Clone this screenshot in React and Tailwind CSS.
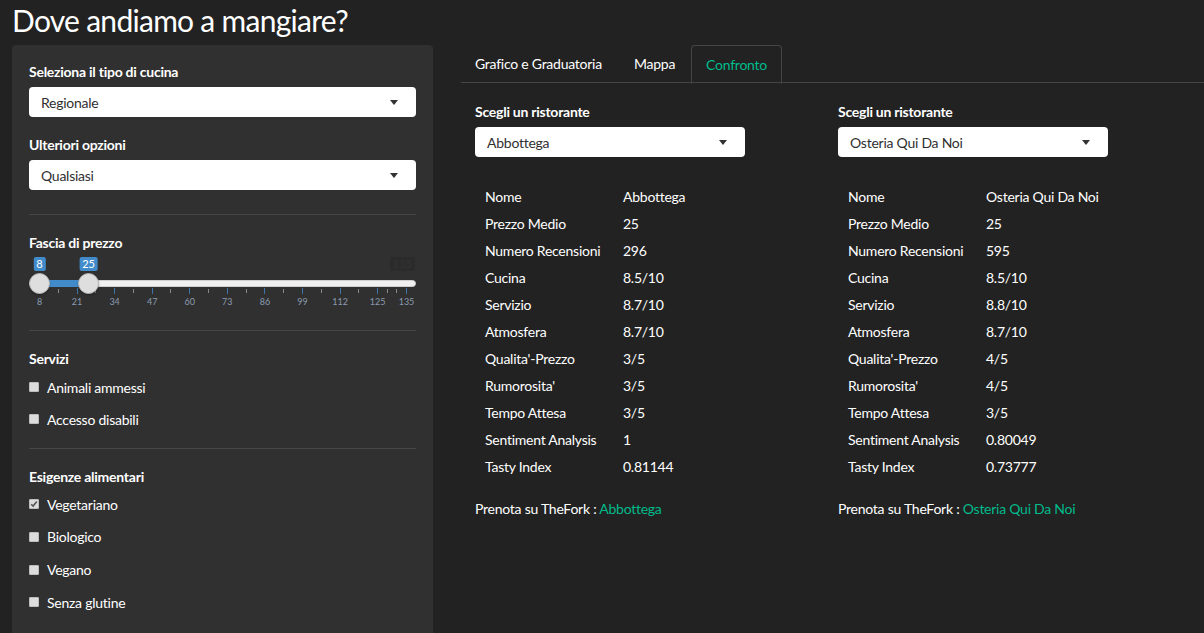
import React from "react";

function Select({ value, className = "" }) {
  return (
    <div className={`h-[30px] bg-white rounded-[4px] flex items-center justify-between pl-[12px] pr-[18px] text-[#303030] text-[14px] ${className}`}>
      <span>{value}</span>
      <span className="w-0 h-0 border-l-[4px] border-r-[4px] border-t-[5px] border-l-transparent border-r-transparent border-t-[#333]" />
    </div>
  );
}

function Label({ children, className = "" }) {
  return <div className={`font-bold text-[14px] leading-[20px] text-white ${className}`}>{children}</div>;
}

function Check({ label, checked }) {
  return (
    <div className="flex items-center h-[20px]">
      <span className="w-[10px] h-[10px] bg-[#dcdcdc] border border-[#bdbdbd] rounded-[1px] flex items-center justify-center mr-[8px]">
        {checked && (
          <svg width="8" height="8" viewBox="0 0 8 8">
            <path d="M1.2 4.2 L3.1 6.1 L6.8 1.6" stroke="#555" strokeWidth="1.6" fill="none" />
          </svg>
        )}
      </span>
      <span className="text-[14px] text-white">{label}</span>
    </div>
  );
}

function Slider() {
  const x = (v) => 10 + ((v - 8) / 127) * 367;
  const majors = [8, 21, 34, 47, 60, 73, 86, 99, 112, 125, 135];
  const minors = [];
  for (let i = 0; i < majors.length - 2; i++) minors.push((majors[i] + majors[i + 1]) / 2);
  minors.push(128.3, 131.7);
  return (
    <div className="relative h-[62px] text-[11px] tracking-normal">
      <div className="absolute top-[4px] h-[14px] px-[3px] leading-[14px] rounded-[2px] bg-[#2b2b2b] text-[#333333] right-[1px]">135</div>
      <div className="absolute top-[27px] left-0 right-0 h-[7px] rounded-full bg-[#f0f0f0] border border-[#cfcfcf]" />
      <div className="absolute top-[27px] h-[7px] bg-[#428bca]" style={{ left: x(8), width: x(25) - x(8) }} />
      {minors.map((v) => (
        <div key={"m" + v} className="absolute top-[36px] w-px h-[4px] bg-[#888]" style={{ left: x(v) }} />
      ))}
      {majors.map((v) => (
        <React.Fragment key={v}>
          <div className="absolute top-[35px] w-px h-[6px] bg-[#3f73a6]" style={{ left: x(v) }} />
          <div className="absolute top-[43px] w-[30px] -ml-[15px] text-center text-[9px] leading-[12px] text-[#8b9bb0]" style={{ left: x(v) + 0.5 }}>
            {v}
          </div>
        </React.Fragment>
      ))}
      {[8, 25].map((v) => (
        <React.Fragment key={"h" + v}>
          <div className="absolute top-[4px] h-[14px] px-[3px] leading-[14px] rounded-[2px] bg-[#428bca] text-white -translate-x-1/2" style={{ left: x(v) + 0.5 }}>
            {v}
          </div>
          <div className="absolute top-[20px] w-[21px] h-[21px] -ml-[10px] rounded-full bg-[#dedede] border border-[#b5b5b5] shadow-[0_1px_2px_rgba(0,0,0,0.35)]" style={{ left: x(v) }} />
        </React.Fragment>
      ))}
    </div>
  );
}

const left = [
  ["Nome", "Abbottega"],
  ["Prezzo Medio", "25"],
  ["Numero Recensioni", "296"],
  ["Cucina", "8.5/10"],
  ["Servizio", "8.7/10"],
  ["Atmosfera", "8.7/10"],
  ["Qualita'-Prezzo", "3/5"],
  ["Rumorosita'", "3/5"],
  ["Tempo Attesa", "3/5"],
  ["Sentiment Analysis", "1"],
  ["Tasty Index", "0.81144"],
];
const right = [
  ["Nome", "Osteria Qui Da Noi"],
  ["Prezzo Medio", "25"],
  ["Numero Recensioni", "595"],
  ["Cucina", "8.5/10"],
  ["Servizio", "8.8/10"],
  ["Atmosfera", "8.7/10"],
  ["Qualita'-Prezzo", "4/5"],
  ["Rumorosita'", "4/5"],
  ["Tempo Attesa", "3/5"],
  ["Sentiment Analysis", "0.80049"],
  ["Tasty Index", "0.73777"],
];

function Column({ sel, rows, name }) {
  return (
    <div className="w-[363px] pl-[15px] pr-[15px]">
      <Label>Scegli un ristorante</Label>
      <Select value={sel} className="w-[270px] mt-[5px]" />
      <div className="mt-[26px]">
        {rows.map(([k, v]) => (
          <div key={k} className="flex h-[27px] items-center text-[14px]">
            <div className="w-[148px] pl-[10px]">{k}</div>
            <div>{v}</div>
          </div>
        ))}
      </div>
      <div className="mt-[19px] h-[20px] leading-[20px] text-[14px]">
        Prenota su TheFork : <span className="text-[#00bc8c]">{name}</span>
      </div>
    </div>
  );
}

export default function App() {
  return (
    <div className="min-h-screen bg-[#222222] text-white font-['Lato','Open_Sans',sans-serif] tracking-[-0.25px] overflow-hidden">
      <div className="h-[45px] pl-[12px] text-[30px] leading-[41px] tracking-[-0.72px]">Dove andiamo a mangiare?</div>
      <div className="flex">
        <div className="ml-[12px] w-[421px] h-[600px] bg-[#303030] rounded-t-[4px] px-[17px] pt-[17px] shrink-0">
          <Label>Seleziona il tipo di cucina</Label>
          <Select value="Regionale" className="mt-[5px]" />
          <Label className="mt-[18px]">Ulteriori opzioni</Label>
          <Select value="Qualsiasi" className="mt-[5px]" />
          <div className="mt-[24px] h-px bg-[#464646]" />
          <Label className="mt-[18px]">Fascia di prezzo</Label>
          <Slider />
          <div className="mt-[15px] h-px bg-[#464646]" />
          <Label className="mt-[18px]">Servizi</Label>
          <div className="mt-[8px] flex flex-col gap-[12px]">
            <Check label="Animali ammessi" />
            <Check label="Accesso disabili" />
          </div>
          <div className="mt-[19px] h-px bg-[#464646]" />
          <Label className="mt-[18px]">Esigenze alimentari</Label>
          <div className="mt-[7px] flex flex-col gap-[12.8px]">
            <Check label="Vegetariano" checked />
            <Check label="Biologico" />
            <Check label="Vegano" />
            <Check label="Senza glutine" />
          </div>
        </div>
        <div className="ml-[28px] flex-1">
          <div className="flex h-[38px] border-b border-[#464545] text-[14px]">
            <div className="px-[14px] flex items-center mr-[4px]">Grafico e Graduatoria</div>
            <div className="px-[14px] flex items-center mr-[2px]">Mappa</div>
            <div className="px-[14px] flex items-center border border-[#464545] border-b-[#222222] rounded-t-[4px] -mb-px h-[39px] text-[#00bc8c]">
              Confronto
            </div>
          </div>
          <div className="flex mt-[19px] -ml-px">
            <Column sel="Abbottega" rows={left} name="Abbottega" />
            <Column sel="Osteria Qui Da Noi" rows={right} name="Osteria Qui Da Noi" />
          </div>
        </div>
      </div>
    </div>
  );
}
